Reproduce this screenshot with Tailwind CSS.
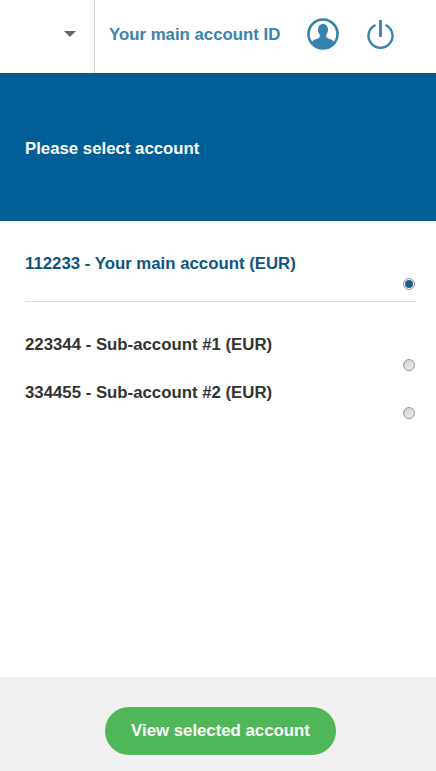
<!DOCTYPE html>
<html><head><meta charset="utf-8"><script src="https://cdn.jsdelivr.net/npm/@tailwindcss/browser@4"></script></head>
<body class="m-0 bg-white">
<div class="w-[436px] h-[771px] flex flex-col font-['Liberation_Sans',Arial,sans-serif] overflow-hidden">
  <header class="h-[73px] flex items-stretch bg-white shrink-0">
    <div class="w-[95px] shrink-0 border-r border-[#d4d4d4] flex items-center justify-end pr-[18px] pb-[5px]">
      <div class="w-0 h-0 border-l-[6px] border-r-[6px] border-t-[6px] border-l-transparent border-r-transparent border-t-[#666666]"></div>
    </div>
    <div class="flex-1 flex items-center pl-[14px] pb-[5px]">
      <span class="w-[197px] text-[16.8px] font-bold text-[#3783ae] leading-none pt-[2px]">Your main account ID</span>
      <svg class="w-[34px] h-[34px] shrink-0" viewBox="0 0 34 34">
        <defs><clipPath id="c"><circle cx="17" cy="17" r="14"/></clipPath></defs>
        <circle cx="17" cy="17" r="14.5" fill="none" stroke="#3783ae" stroke-width="2.6"/>
        <g clip-path="url(#c)" fill="#3783ae">
          <ellipse cx="17" cy="13" rx="5" ry="6.3"/>
          <path d="M14 18 L20 18 L20.5 20.5 C23 22 27 22.5 28 25 L30 34 L4 34 L6 25 C7 22.5 11 22 13.5 20.5 Z"/>
        </g>
      </svg>
      <svg class="w-[30px] h-[32px] ml-[26px] shrink-0" viewBox="0 0 30 32">
        <path d="M9.5 7 A12 12 0 1 0 19.5 7" fill="none" stroke="#3783ae" stroke-width="2.4"/>
        <path d="M14.5 2 V19" stroke="#3783ae" stroke-width="2.8" fill="none"/>
      </svg>
    </div>
  </header>
  <section class="h-[148px] bg-[#005e97] flex items-center pl-[25px] pt-[4px] shrink-0">
    <h1 class="text-[16.8px] font-bold text-white leading-none">Please select account</h1>
  </section>
  <main class="flex-1 pl-[25px] pr-[20px] pt-[34px] flex flex-col">
    <div class="h-[47px] border-b border-[#dddddd] relative">
      <p class="text-[16.8px] font-bold text-[#0f5480] leading-[18px]">112233 - Your main account (EUR)</p>
      <span class="absolute right-[1px] top-[23px] w-[12px] h-[12px] rounded-full border border-[#8f8f8f] bg-white flex items-center justify-center"><span class="w-[8px] h-[8px] rounded-full bg-[#1d5f85]"></span></span>
    </div>
    <div class="h-[48px] mt-[34px] relative">
      <p class="text-[16.8px] font-bold text-[#333333] leading-[18px]">223344 - Sub-account #1 (EUR)</p>
      <span class="absolute right-[1px] top-[23px] w-[12px] h-[12px] rounded-full border border-[#9a9a9a] bg-linear-to-br from-[#cfcfcf] to-[#f0f0f0]"></span>
    </div>
    <div class="h-[48px] relative">
      <p class="text-[16.8px] font-bold text-[#333333] leading-[18px]">334455 - Sub-account #2 (EUR)</p>
      <span class="absolute right-[1px] top-[23px] w-[12px] h-[12px] rounded-full border border-[#9a9a9a] bg-linear-to-br from-[#cfcfcf] to-[#f0f0f0]"></span>
    </div>
  </main>
  <footer class="h-[94px] bg-[#f1f1f1] flex justify-center items-start pt-[30px] pl-[5px] shrink-0">
    <button class="w-[231px] h-[48px] rounded-full bg-[#4fb757] text-white text-[16.8px] font-bold">View selected account</button>
  </footer>
</div>
</body></html>
